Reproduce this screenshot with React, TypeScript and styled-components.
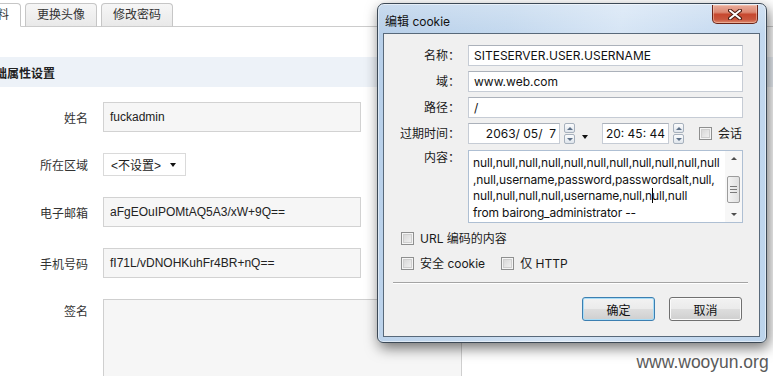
import React from 'react';
import styled, { createGlobalStyle } from 'styled-components';

const CJK = `"Liberation Sans", "Noto Sans CJK SC", sans-serif`;
const UI = `Inter, "Noto Sans CJK SC", sans-serif`;

const GlobalStyle = createGlobalStyle`
    html, body {
        margin: 0;
        padding: 0;
        background: #ffffff;
    }
    body {
        font-family: ${CJK};
        overflow: hidden;
    }
`;

interface CheckProps {
    label: string;
}

const contentLines = [
    'null,null,null,null,null,null,null,null,null,null,null',
    ',null,username,password,passwordsalt,null,',
];

const Check: React.FC<CheckProps> = ({ label }) => (
    <CheckItem>
        <CheckBox />
        <span>{label}</span>
    </CheckItem>
);

const Spinner: React.FC = () => (
    <SpinBox>
        <SpinHalf>
            <Tri $dir="up" />
        </SpinHalf>
        <SpinHalf>
            <Tri $dir="down" />
        </SpinHalf>
    </SpinBox>
);

export default function App(): React.ReactElement {
    return (
        <Page>
            <GlobalStyle />
            <TabBar>
                <Tab $active $first>
                    基本资料
                </Tab>
                <Tab>更换头像</Tab>
                <Tab>修改密码</Tab>
            </TabBar>
            <SectionHead>
                <SectionTitle>基础属性设置</SectionTitle>
            </SectionHead>
            <Form>
                <Row>
                    <Label>姓名</Label>
                    <TextInput>fuckadmin</TextInput>
                </Row>
                <Row>
                    <Label>所在区域</Label>
                    <Select>
                        <span>&lt;不设置&gt;</span>
                        <Caret />
                    </Select>
                </Row>
                <Row>
                    <Label>电子邮箱</Label>
                    <TextInput>aFgEOuIPOMtAQ5A3/xW+9Q==</TextInput>
                </Row>
                <Row>
                    <Label>手机号码</Label>
                    <TextInput>fI71L/vDNOHKuhFr4BR+nQ==</TextInput>
                </Row>
                <Row $top>
                    <Label $padTop>签名</Label>
                    <TextArea />
                </Row>
            </Form>

            <Window>
                <TitleBar>
                    <TitleText>编辑 cookie</TitleText>
                    <CloseButton>
                        <svg width="14" height="11" viewBox="0 0 14 11">
                            <path d="M2 1.5 L12 9.5 M12 1.5 L2 9.5" stroke="#4a1c12" strokeWidth="4" strokeLinecap="round" />
                            <path d="M2 1.5 L12 9.5 M12 1.5 L2 9.5" stroke="#ffffff" strokeWidth="2" strokeLinecap="round" />
                        </svg>
                    </CloseButton>
                </TitleBar>
                <Client>
                    <Fields>
                        <DlgRow>
                            <DlgLabel>名称：</DlgLabel>
                            <DlgInput>SITESERVER.USER.USERNAME</DlgInput>
                        </DlgRow>
                        <DlgRow>
                            <DlgLabel>域：</DlgLabel>
                            <DlgInput>www.web.com</DlgInput>
                        </DlgRow>
                        <DlgRow>
                            <DlgLabel>路径：</DlgLabel>
                            <DlgInput>/</DlgInput>
                        </DlgRow>
                        <DlgRow>
                            <DlgLabel>过期时间：</DlgLabel>
                            <DateBox>{'2063/ 05/  7'}</DateBox>
                            <Spinner />
                            <DropArrow />
                            <TimeBox>{'20: 45: 44'}</TimeBox>
                            <Spinner />
                            <SessionCheck>
                                <Check label="会话" />
                            </SessionCheck>
                        </DlgRow>
                        <DlgRow $top>
                            <DlgLabel>内容：</DlgLabel>
                            <ContentBox>
                                <ContentText>
                                    {contentLines.map((l) => (
                                        <div key={l}>{l}</div>
                                    ))}
                                    <div>
                                        null,null,null,null,username,null,n
                                        <TextCaret />
                                        ull,null
                                    </div>
                                    <div>from bairong_administrator --</div>
                                </ContentText>
                                <ScrollBar>
                                    <ScrollArrow>
                                        <Tri $dir="up" $dark />
                                    </ScrollArrow>
                                    <Thumb>
                                        <Grip />
                                        <Grip />
                                        <Grip />
                                    </Thumb>
                                    <ScrollFill />
                                    <ScrollArrow>
                                        <Tri $dir="down" $dark />
                                    </ScrollArrow>
                                </ScrollBar>
                            </ContentBox>
                        </DlgRow>
                    </Fields>
                    <Checks>
                        <CheckLine>
                            <Check label="URL 编码的内容" />
                        </CheckLine>
                        <CheckLine>
                            <Check label="安全 cookie" />
                            <Check label="仅 HTTP" />
                        </CheckLine>
                    </Checks>
                    <Separator />
                    <ButtonBar>
                        <DlgButton $default>确定</DlgButton>
                        <DlgButton>取消</DlgButton>
                    </ButtonBar>
                </Client>
            </Window>

            <Watermark>www.wooyun.org</Watermark>
        </Page>
    );
}

const Page = styled.div`
    position: relative;
    width: 773px;
    height: 376px;
    overflow: hidden;
    background: #ffffff;
`;

const TabBar = styled.div`
    display: flex;
    gap: 4px;
    height: 27px;
    padding-top: 3px;
    box-sizing: border-box;
    border-bottom: 1px solid #cccccc;
`;

const Tab = styled.div<{ $active?: boolean; $first?: boolean }>`
    height: 24px;
    box-sizing: border-box;
    padding: 0 11px;
    margin-bottom: -1px;
    margin-left: ${(p) => (p.$first ? '-51px' : '0')};
    border: 1px solid #c6c6c6;
    border-bottom-color: ${(p) => (p.$active ? '#ffffff' : '#cccccc')};
    border-radius: 4px 4px 0 0;
    background: ${(p) => (p.$active ? '#ffffff' : 'linear-gradient(#f6f6f6, #e9e9e9)')};
    font-size: 12px;
    line-height: 22px;
    color: #333333;
    white-space: nowrap;
`;

const SectionHead = styled.div`
    margin-top: 30px;
    height: 30px;
    display: flex;
    align-items: center;
    background: #edf2f8;
`;

const SectionTitle = styled.span`
    margin-left: -17px;
    font: bold 12px ${CJK};
    color: #222222;
`;

const Form = styled.div`
    display: flex;
    flex-direction: column;
    gap: 21px;
    padding-top: 15px;
`;

const Row = styled.div<{ $top?: boolean }>`
    display: flex;
    align-items: ${(p) => (p.$top ? 'flex-start' : 'center')};
`;

const Label = styled.div<{ $padTop?: boolean }>`
    width: 88px;
    margin-right: 15px;
    padding-top: ${(p) => (p.$padTop ? '3px' : '0')};
    text-align: right;
    font-size: 12px;
    color: #333333;
`;

const TextInput = styled.div`
    width: 258px;
    height: 30px;
    box-sizing: border-box;
    padding-left: 6px;
    border: 1px solid #d2d2d2;
    background: #f6f6f6;
    font: 12px "Liberation Sans", sans-serif;
    line-height: 28px;
    color: #222222;
`;

const Select = styled.div`
    width: 83px;
    height: 23px;
    box-sizing: border-box;
    display: flex;
    align-items: center;
    gap: 9px;
    padding-left: 7px;
    border: 1px solid #dadada;
    background: #ffffff;
    font-size: 12px;
    color: #222222;
`;

const Caret = styled.span`
    width: 0;
    height: 0;
    border-left: 3.5px solid transparent;
    border-right: 3.5px solid transparent;
    border-top: 4px solid #111111;
`;

const TextArea = styled.div`
    width: 359px;
    height: 100px;
    box-sizing: border-box;
    border: 1px solid #cfcfcf;
    background: #f6f6f6;
`;

const Window = styled.div`
    position: absolute;
    left: 377px;
    top: 3px;
    width: 390px;
    height: 340px;
    box-sizing: border-box;
    display: flex;
    flex-direction: column;
    padding: 0 6px 5px 5px;
    border: 1px solid #3c4956;
    border-radius: 7px 7px 6px 6px;
    background:
        linear-gradient(rgba(255, 255, 255, 0.25), rgba(255, 255, 255, 0) 30px),
        linear-gradient(100deg, #b7cfe9 0%, #c3d8ee 30%, #d6e5f5 55%, #c9dcf1 75%, #bcd4ec 100%);
    box-shadow: 2px 5px 14px rgba(0, 0, 0, 0.55), inset 0 0 0 1px rgba(255, 255, 255, 0.5);
`;

const TitleBar = styled.div`
    height: 29px;
    display: flex;
    justify-content: space-between;
    align-items: flex-start;
`;

const TitleText = styled.span`
    padding: 8px 0 0 2px;
    font: 12px ${UI};
    color: #111111;
`;

const CloseButton = styled.div`
    width: 46px;
    height: 19px;
    margin: 1px 2px 0 0;
    box-sizing: border-box;
    display: flex;
    align-items: center;
    justify-content: center;
    border: 1px solid #6b2418;
    border-top: none;
    border-radius: 0 0 5px 5px;
    background: linear-gradient(#e9ab9a 0%, #dc8a74 40%, #c7482f 52%, #c9563d 80%, #de8a6f 100%);
    box-shadow: inset 0 0 0 1px rgba(255, 220, 200, 0.45);
`;

const Client = styled.div`
    flex: 1;
    display: flex;
    flex-direction: column;
    border: 1px solid #58697a;
    background: #f0f0f0;
`;

const Fields = styled.div`
    display: flex;
    flex-direction: column;
    gap: 5px;
    padding: 11px 16px 0 0;
`;

const DlgRow = styled.div<{ $top?: boolean }>`
    display: flex;
    align-items: ${(p) => (p.$top ? 'flex-start' : 'center')};
    margin-top: ${(p) => (p.$top ? '1px' : '0')};
`;

const DlgLabel = styled.div`
    width: 76px;
    margin-right: 8px;
    text-align: right;
    font: 12px ${UI};
    line-height: 16px;
    color: #1a1a1a;
    white-space: nowrap;
`;

const boxBorder = `
    border: 1px solid #c6ccd5;
    border-top-color: #abb1ba;
    background: #ffffff;
    box-sizing: border-box;
    font: 12px ${UI};
    color: #111111;
    white-space: pre;
`;

const DlgInput = styled.div`
    ${boxBorder}
    width: 275px;
    height: 21px;
    padding-left: 5px;
    line-height: 19px;
`;

const DateBox = styled.div`
    ${boxBorder}
    width: 92px;
    height: 21px;
    padding-right: 3px;
    text-align: right;
    line-height: 19px;
`;

const TimeBox = styled.div`
    ${boxBorder}
    width: 67px;
    height: 21px;
    margin-left: 14px;
    padding-right: 3px;
    text-align: right;
    line-height: 19px;
`;

const SpinBox = styled.div`
    width: 11px;
    height: 21px;
    margin-left: 4px;
    display: flex;
    flex-direction: column;
    gap: 1px;
`;

const SpinHalf = styled.div`
    flex: 1;
    display: flex;
    align-items: center;
    justify-content: center;
    border: 1px solid #a7b1bd;
    border-radius: 2px;
    background: linear-gradient(#fbfcfd, #dfe5ec);
`;

const Tri = styled.span<{ $dir: 'up' | 'down'; $dark?: boolean }>`
    width: 0;
    height: 0;
    border-left: 3px solid transparent;
    border-right: 3px solid transparent;
    ${(p) =>
        p.$dir === 'up'
            ? `border-bottom: 3px solid ${p.$dark ? '#4e4e4e' : '#5d7088'};`
            : `border-top: 3px solid ${p.$dark ? '#4e4e4e' : '#5d7088'};`}
`;

const DropArrow = styled.span`
    width: 0;
    height: 0;
    margin: 6px 0 0 7px;
    border-left: 3.5px solid transparent;
    border-right: 3.5px solid transparent;
    border-top: 4px solid #111111;
`;

const SessionCheck = styled.div`
    margin-left: 15px;
`;

const ContentBox = styled.div`
    ${boxBorder}
    width: 275px;
    height: 73px;
    display: flex;
    border-color: #aebfd3;
`;

const ContentText = styled.div`
    flex: 1;
    padding: 4px 0 0 4px;
    line-height: 16.5px;
    letter-spacing: -0.15px;
    overflow: hidden;
`;

const TextCaret = styled.span`
    display: inline-block;
    width: 1px;
    height: 15px;
    margin: 0 -0.5px;
    vertical-align: -3px;
    background: #000000;
`;

const ScrollBar = styled.div`
    width: 17px;
    display: flex;
    flex-direction: column;
    align-items: center;
    background: #f7f7f7;
`;

const ScrollArrow = styled.div`
    height: 15px;
    display: flex;
    align-items: center;
    justify-content: center;
`;

const Thumb = styled.div`
    width: 13px;
    height: 27px;
    margin-top: 10px;
    box-sizing: border-box;
    display: flex;
    flex-direction: column;
    align-items: center;
    justify-content: center;
    gap: 2px;
    border: 1px solid #9c9c9c;
    border-radius: 2px;
    background: linear-gradient(90deg, #f4f4f4, #e0e0e0);
`;

const Grip = styled.span`
    width: 7px;
    height: 1px;
    background: #7a7a7a;
`;

const ScrollFill = styled.div`
    flex: 1;
`;

const Checks = styled.div`
    display: flex;
    flex-direction: column;
    gap: 8px;
    padding: 7px 0 0 17px;
`;

const CheckLine = styled.div`
    display: flex;
    gap: 16px;
`;

const CheckItem = styled.label`
    display: flex;
    align-items: center;
    gap: 6px;
    font: 12px ${UI};
    line-height: 17px;
    color: #1a1a1a;
`;

const CheckBox = styled.span`
    width: 13px;
    height: 13px;
    box-sizing: border-box;
    border: 1px solid #8e8f8f;
    background: linear-gradient(135deg, #d2d2d2, #f6f6f6);
    box-shadow: inset 0 0 0 1px #f5f5f5, inset 0 0 0 2px #cfcfcf;
`;

const Separator = styled.div`
    margin: 10px 11px 0 9px;
    border-top: 1px solid #a4a4a4;
    border-bottom: 1px solid #ffffff;
`;

const ButtonBar = styled.div`
    display: flex;
    justify-content: flex-end;
    gap: 14px;
    padding: 13px 17px 0 0;
`;

const DlgButton = styled.div<{ $default?: boolean }>`
    width: 73px;
    height: 24px;
    box-sizing: border-box;
    display: flex;
    align-items: center;
    justify-content: center;
    border: 1px solid ${(p) => (p.$default ? '#3c7fb1' : '#707070')};
    border-radius: 3px;
    background: linear-gradient(#f2f2f2 0%, #ebebeb 48%, #dddddd 52%, #cfcfcf 100%);
    box-shadow: inset 0 0 0 1px ${(p) => (p.$default ? '#a8dcf6' : '#fbfbfb')};
    font: 12px ${UI};
    color: #111111;
`;

const Watermark = styled.div`
    position: absolute;
    right: 4px;
    bottom: 3px;
    font: 19px "Liberation Sans", sans-serif;
    color: #5a5a5a;
    transform: scaleX(0.92);
    transform-origin: right bottom;
`;
